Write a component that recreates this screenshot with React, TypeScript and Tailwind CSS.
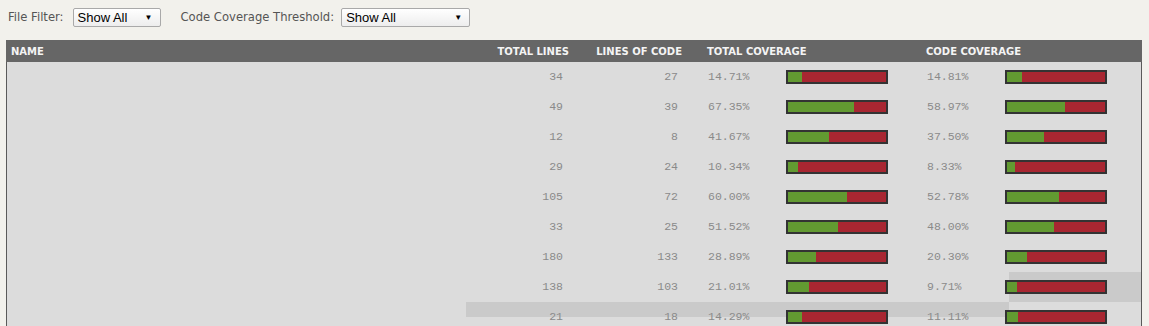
/**
 * Coverage report table - file list with line counts and coverage bars
 */

interface FileRow {
  totalLines: number;
  linesOfCode: number;
  totalCoverage: number;
  codeCoverage: number;
}

const rows: FileRow[] = [
  { totalLines: 34, linesOfCode: 27, totalCoverage: 14.71, codeCoverage: 14.81 },
  { totalLines: 49, linesOfCode: 39, totalCoverage: 67.35, codeCoverage: 58.97 },
  { totalLines: 12, linesOfCode: 8, totalCoverage: 41.67, codeCoverage: 37.5 },
  { totalLines: 29, linesOfCode: 24, totalCoverage: 10.34, codeCoverage: 8.33 },
  { totalLines: 105, linesOfCode: 72, totalCoverage: 60.0, codeCoverage: 52.78 },
  { totalLines: 33, linesOfCode: 25, totalCoverage: 51.52, codeCoverage: 48.0 },
  { totalLines: 180, linesOfCode: 133, totalCoverage: 28.89, codeCoverage: 20.3 },
  { totalLines: 138, linesOfCode: 103, totalCoverage: 21.01, codeCoverage: 9.71 },
  { totalLines: 21, linesOfCode: 18, totalCoverage: 14.29, codeCoverage: 11.11 },
];

const sans = "font-['DejaVu_Sans',Verdana,sans-serif]";
const mono = "font-['Liberation_Mono','Courier_New',monospace]";

function FakeSelect({ width }: { width: string }) {
  return (
    <div
      className={`${width} h-[19px] flex items-center justify-between pl-[4px] pr-[7px] border border-[#a9a9a9] rounded-[2px] bg-gradient-to-b from-white to-[#ededed] text-black text-[13px] font-['Liberation_Sans',Arial,sans-serif]`}
    >
      <span>Show All</span>
      <span className="text-[8px] leading-none">▼</span>
    </div>
  );
}

function CoverageBar({ percent }: { percent: number }) {
  return (
    <div className="w-[102px] h-[14px] border-2 border-[#333] bg-[#a82631] flex">
      <div className="h-full bg-[#629a31]" style={{ width: `${percent}%` }} />
    </div>
  );
}

export default function App() {
  return (
    <div className={`min-h-screen bg-[#f2f1ec] ${sans} overflow-hidden`}>
      {/* 过滤器 */}
      <div className="flex items-center h-[34px] pt-[1px] pl-[8px] text-[11.6px] text-[#555]">
        <span className="mr-[9px]">File Filter:</span>
        <FakeSelect width="w-[88px]" />
        <span className="ml-[20px] mr-[7px]">Code Coverage Threshold:</span>
        <FakeSelect width="w-[129px]" />
      </div>

      <div className="mt-[6px] ml-[6px] w-[1136px]">
        {/* 表头 */}
        <div className="flex items-center h-[22px] bg-[#666] text-[#f4f4f4] text-[10px] font-bold">
          <div className="w-[469px] pl-[5px]">NAME</div>
          <div className="w-[98px] text-right pr-[4px]">TOTAL LINES</div>
          <div className="w-[113px] text-right pr-[4px]">LINES OF CODE</div>
          <div className="w-[236px] pl-[21px]">TOTAL COVERAGE</div>
          <div className="pl-[4px]">CODE COVERAGE</div>
        </div>

        {/* 表体 */}
        <div className="relative bg-[#dcdcdc] border-l border-r border-[#5a5a5a]">
          <div className="absolute left-[459px] top-[240px] w-[543px] h-[15px] bg-[#cacaca]" />
          <div className="absolute left-[1002px] top-[210px] w-[132px] h-[30px] bg-[#cacaca]" />
          {rows.map((row, i) => (
            <div
              key={i}
              className={`relative flex items-center h-[30px] text-[11.5px] text-[#8a8a8a] ${mono}`}
            >
              <div className="w-[468px]" />
              <div className="w-[98px] text-right pr-[10px]">{row.totalLines}</div>
              <div className="w-[113px] text-right pr-[8px]">{row.linesOfCode}</div>
              <div className="w-[236px] pl-[22px] flex items-center">
                <span className="w-[78px]">{row.totalCoverage.toFixed(2)}%</span>
                <CoverageBar percent={row.totalCoverage} />
              </div>
              <div className="pl-[5px] flex items-center">
                <span className="w-[78px]">{row.codeCoverage.toFixed(2)}%</span>
                <CoverageBar percent={row.codeCoverage} />
              </div>
            </div>
          ))}
        </div>
      </div>
    </div>
  );
}
